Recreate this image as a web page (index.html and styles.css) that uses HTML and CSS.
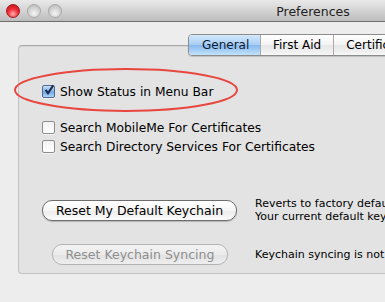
FILE: index.html
```html
<!DOCTYPE html>
<html>
<head>
<meta charset="utf-8">
<title>Preferences</title>
<link rel="stylesheet" href="styles.css">
</head>
<body>
	<div class="window">
		<!-- title bar -->
		<div class="titlebar">
			<div class="lights">
				<span class="light close"></span>
				<span class="light"></span>
				<span class="light"></span>
			</div>
			<div class="title">Preferences</div>
		</div>

		<!-- tabs -->
		<div class="tabs">
			<div class="tab selected">General</div>
			<div class="tab">First Aid</div>
			<div class="tab">Certificates</div>
			<div class="tab">Trust Policies</div>
		</div>

		<!-- content -->
		<div class="panel">
			<div class="check first">
				<span class="box on">
					<svg width="12" height="12" viewBox="0 0 12 12"><path d="M2.6 5.8 L5 9.2 L10.2 1.4" fill="none" stroke="#1b2a4a" stroke-width="2"/></svg>
				</span>
				Show Status in Menu Bar
			</div>
			<div class="check gap">
				<span class="box"></span>
				Search MobileMe For Certificates
			</div>
			<div class="check">
				<span class="box"></span>
				Search Directory Services For Certificates
			</div>

			<div class="action first-action">
				<div class="btncell"><div class="button">Reset My Default Keychain</div></div>
				<div class="note">Reverts to factory defaults and deletes all keychain items.<br>Your current default keychain will be saved.</div>
			</div>
			<div class="action">
				<div class="btncell"><div class="button disabled">Reset Keychain Syncing</div></div>
				<div class="note">Keychain syncing is not enabled.</div>
			</div>
		</div>

		<!-- annotation -->
		<svg class="circle" width="226" height="48" viewBox="0 0 226 48">
			<ellipse cx="113" cy="24" rx="111" ry="21" fill="none" stroke="#e8473f" stroke-width="2"/>
		</svg>
	</div>
</body>
</html>
```

FILE: styles.css
```css
body {
	margin: 0;
	overflow: hidden;
	background: #ececec;
	font-family: "DejaVu Sans", sans-serif;
	font-size: 12px;
	color: #000;
}

.window {
	position: relative;
	width: 620px;
	height: 302px;
	background: #ededed;
}

/* title bar */
.titlebar {
	height: 21px;
	display: flex;
	align-items: center;
	background: linear-gradient(#e9e9e9, #cfcfcf 60%, #bcbcbc);
	border-bottom: 1px solid #6e6e6e;
}

.lights {
	display: flex;
	gap: 7px;
	padding-left: 6px;
	width: 200px;
}

.light {
	width: 12px;
	height: 12px;
	border-radius: 50%;
	border: 1px solid #a8a8a8;
	background: radial-gradient(circle at 50% 70%, #f4f4f4, #cdcdcd 60%, #b4b4b4);
}

.light.close {
	border-color: #a01818;
	background: radial-gradient(circle at 50% 75%, #ffb0b0, #f0303a 45%, #b80e16);
}

.title {
	flex: 1;
	text-align: center;
	font-size: 12.5px;
	color: #222;
	padding-right: 210px;
	padding-left: 10px;
	padding-top: 1px;
}

/* tabs */
.tabs {
	position: relative;
	z-index: 1;
	display: flex;
	margin: 12px 0 -11px 188px;
	width: max-content;
	border: 1px solid #8c8c8c;
	border-radius: 4px;
	overflow: hidden;
	box-shadow: 0 1px 1px rgba(0,0,0,0.15);
}

.tab {
	height: 20px;
	line-height: 20px;
	padding: 0 12px;
	background: linear-gradient(#ffffff, #f3f3f3 50%, #e6e6e6 51%, #f6f6f6);
	border-left: 1px solid #a9a9a9;
}

.tab:first-child {
	border-left: none;
	padding-left: 13px;
}

.tab.selected {
	width: 46px;
	background: linear-gradient(#d3e8fb, #a6cdf4 50%, #86b9ee 51%, #c3e2fb);
	color: #0d1c30;
}

/* panel */
.panel {
	margin-left: 18px;
	height: 191px;
	padding: 36px 0 0 23px;
	background: #e3e3e3;
	border: 1px solid #c3c3c3;
	border-top-color: #a9a9a9;
	border-right: none;
	border-radius: 4px 0 0 4px;
	box-shadow: inset 0 1px 1px rgba(0,0,0,0.06);
}

.check {
	display: flex;
	align-items: center;
	gap: 5px;
	height: 19px;
	white-space: nowrap;
	font-size: 12.25px;
}

.check.gap {
	margin-top: 17px;
}

.box {
	display: block;
	width: 11px;
	height: 11px;
	border: 1px solid #8d8d8d;
	border-radius: 2px;
	background: linear-gradient(#f2f2f2, #ffffff);
	box-shadow: 0 1px 0 rgba(255,255,255,0.6);
}

.box.on {
	border-color: #4d6a96;
	background: linear-gradient(#c8e0f8, #7fb0e6 50%, #6aa2e0 51%, #b0d6fa);
}

.box svg {
	display: block;
	margin: -2px 0 0 0;
}

/* buttons */
.action {
	display: flex;
	align-items: center;
	gap: 18px;
	white-space: nowrap;
}

.first-action {
	margin-top: 41px;
	margin-bottom: 21px;
}

.btncell {
	width: 195px;
	display: flex;
	justify-content: center;
}

.button {
	height: 19px;
	line-height: 19px;
	padding: 0 13px;
	border: 1px solid #6d6d6d;
	border-radius: 10px;
	background: linear-gradient(#ffffff, #f6f6f6 50%, #ececec 51%, #fbfbfb);
	box-shadow: 0 1px 1px rgba(0,0,0,0.2);
	font-size: 12.5px;
}

.button.disabled {
	width: 148px;
	text-align: center;
	border-color: #b3b3b3;
	color: #8e8e8e;
	background: linear-gradient(#f3f3f3, #ebebeb 50%, #e2e2e2 51%, #eeeeee);
	box-shadow: none;
}

.note {
	font-size: 11px;
	line-height: 13px;
}

/* red annotation ellipse */
.circle {
	position: absolute;
	left: 13px;
	top: 66px;
}
```
